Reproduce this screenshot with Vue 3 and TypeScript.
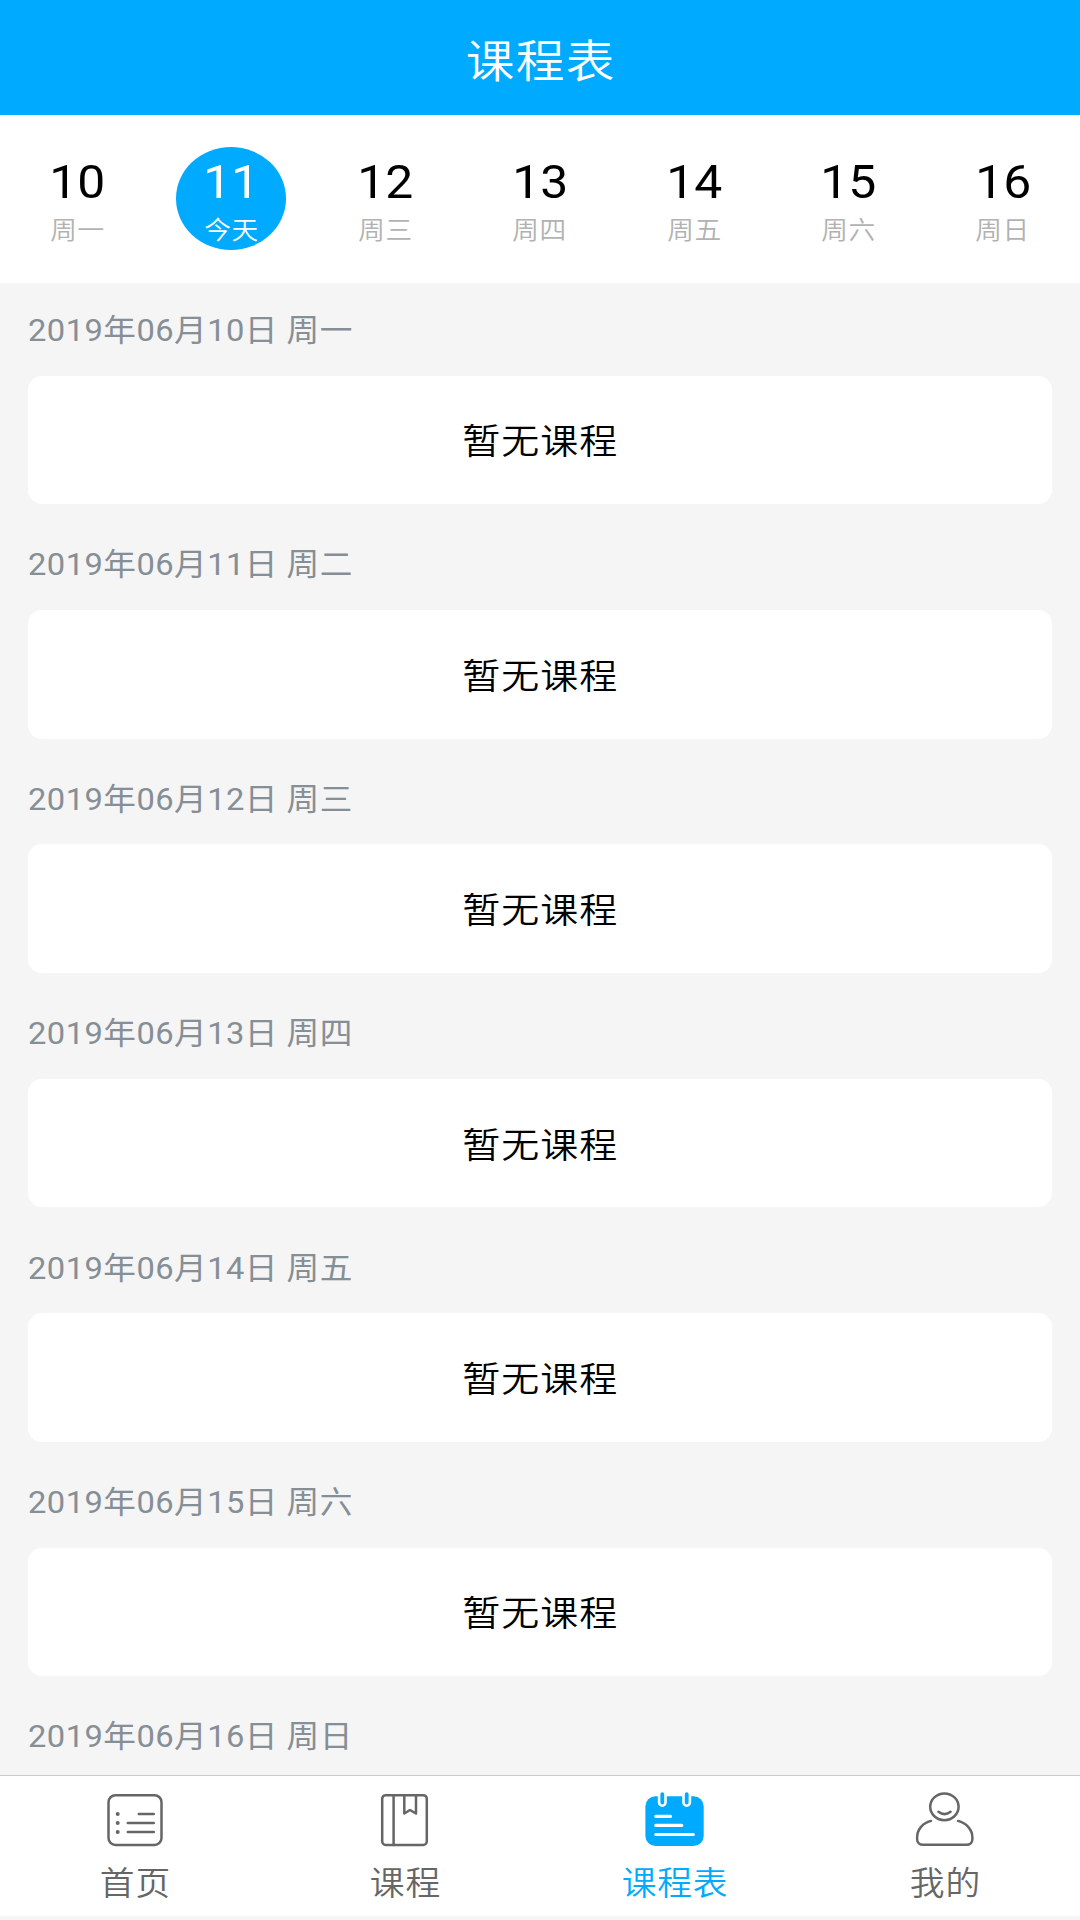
<script setup lang="ts">
interface Day {
  num: string
  week: string
}

const days: Day[] = [
  { num: '10', week: '周一' },
  { num: '11', week: '周二' },
  { num: '12', week: '周三' },
  { num: '13', week: '周四' },
  { num: '14', week: '周五' },
  { num: '15', week: '周六' },
  { num: '16', week: '周日' },
]
const today = '11'

const tabs = [
  { id: 'home', label: '首页' },
  { id: 'course', label: '课程' },
  { id: 'schedule', label: '课程表' },
  { id: 'mine', label: '我的' },
]
const activeTab = 'schedule'
</script>

<template>
  <div class="screen">
    <header class="header"><span class="wide">课程表</span></header>

    <nav class="week">
      <div v-for="d in days" :key="d.num" class="day">
        <div class="bubble" :class="{ today: d.num === today }">
          <span class="num wide">{{ d.num }}</span>
          <span class="name wide">{{ d.num === today ? '今天' : d.week }}</span>
        </div>
      </div>
    </nav>

    <main class="list">
      <section v-for="(d, i) in days" :key="d.num" class="group">
        <h2 class="date"><span class="wide left">2019年06月{{ d.num }}日 {{ d.week }}</span></h2>
        <div v-if="i < days.length - 1" class="card"><span class="wide">暂无课程</span></div>
      </section>
    </main>

    <footer class="tabs">
      <div v-for="t in tabs" :key="t.id" class="tab" :class="{ active: t.id === activeTab }">
        <svg v-if="t.id === 'home'" class="icon" viewBox="0 0 60 60">
          <rect x="3.5" y="5.2" width="53" height="49.8" rx="7" />
          <path d="M33.8 24H48.8M22.8 33H48.8M22.8 42H48.8" />
          <path class="dots" d="M12.7 24h.01M12.7 33h.01M12.7 42h.01" />
        </svg>
        <svg v-else-if="t.id === 'course'" class="icon" viewBox="0 0 60 60">
          <rect x="7.2" y="5.2" width="44.6" height="49.8" rx="3.5" />
          <path d="M18.6 5.2V55M29.3 5.2V23.5L35 20L41 23.5V5.2" />
        </svg>
        <svg v-else-if="t.id === 'schedule'" class="icon" viewBox="0 0 60 60">
          <rect class="solid" x=".4" y="6.2" width="58.3" height="49.8" rx="10" />
          <path class="halo" d="M17.3 2V12.4M41.7 2V12.4" />
          <path class="pin" d="M17.3 4.2V12.6M41.7 4.2V12.6" />
          <path class="lines" d="M10.8 26.3H25.5M10.8 35.4H36.8M10.8 44.5H48.3" />
        </svg>
        <svg v-else class="icon" viewBox="0 0 60 60">
          <ellipse cx="29.4" cy="16.8" rx="14.2" ry="13.4" />
          <path d="M23.4 21.8Q29.4 26.4 35.6 21.8" />
          <path d="M16 30.9C7.5 33 2.1 39.8 2.1 47.5V49C2.1 52.6 4.7 54.8 8.2 54.8H51.4C54.9 54.8 57.4 52.6 57.4 49V47.5C57.4 39.8 51.5 33 43 30.9" />
        </svg>
        <span class="wide">{{ t.label }}</span>
      </div>
    </footer>
  </div>
</template>

<style>
body {
  margin: 0;
}
</style>

<style scoped>
.screen {
  width: 1080px;
  height: 1920px;
  box-sizing: border-box;
  padding-bottom: 4px;
  display: flex;
  flex-direction: column;
  overflow: hidden;
  background: #f5f5f5;
  font-family: Roboto, 'Noto Sans CJK SC', sans-serif;
  font-weight: 400;
}

/* glyphs are slightly wider than tall across the whole app */
.wide {
  display: inline-block;
  white-space: nowrap;
  transform: scaleX(1.067);
}
.wide.left {
  transform-origin: 0 50%;
}

.header {
  flex: none;
  height: 115px;
  display: flex;
  align-items: center;
  justify-content: center;
  padding-top: 10px;
  box-sizing: border-box;
  background: #00aaff;
  color: #fff;
  font-size: 45.6px;
  letter-spacing: 1.3px;
  text-indent: 1.3px;
  font-weight: 350;
  line-height: 60px;
}

.week {
  flex: none;
  height: 168px;
  display: flex;
  background: #fff;
}
.day {
  flex: 1;
  display: flex;
  justify-content: center;
  padding-top: 31.5px;
}
.bubble {
  width: 110px;
  height: 103px;
  display: flex;
  flex-direction: column;
  align-items: center;
  border-radius: 50%;
  color: #000;
}
.num {
  margin-top: 7.5px;
  font-size: 46.7px;
  line-height: 56px;
}
.name {
  margin-top: 3px;
  font-size: 25px;
  letter-spacing: 0.6px;
  font-weight: 350;
  line-height: 36px;
  color: #b2b2b2;
}
.today {
  background: #00aaff;
  color: #fff;
}
.today .name {
  color: #fff;
}

.list {
  flex: 1;
  min-height: 0;
  overflow: hidden;
  padding: 0 28px;
}
.group {
  height: 234.4px;
  display: flex;
  flex-direction: column;
}
.date {
  margin: 0;
  height: 92.6px;
  line-height: 95px;
  font-size: 30.6px;
  letter-spacing: 0.45px;
  font-weight: 400;
  color: #868e96;
}
.card {
  height: 128.6px;
  display: flex;
  align-items: center;
  justify-content: center;
  border-radius: 14px;
  background: #fff;
  color: #000;
  font-size: 35.6px;
  letter-spacing: 1px;
  text-indent: 1px;
  font-weight: 350;
}
.card .wide {
  margin-top: -2px;
}

.tabs {
  flex: none;
  height: 141.5px;
  box-sizing: border-box;
  display: flex;
  border-top: 1px solid #ccc;
  background: #fff;
}
.tab {
  flex: 1;
  display: flex;
  flex-direction: column;
  align-items: center;
  padding-top: 14.5px;
  color: #666;
  font-size: 32.6px;
  letter-spacing: 0.8px;
  font-weight: 350;
  line-height: 48px;
}
.tab .wide {
  margin-top: 10px;
}
.active {
  color: #00aaff;
}
.icon {
  width: 60px;
  height: 60px;
  flex: none;
  fill: none;
  stroke: currentColor;
  stroke-width: 2.5;
  stroke-linecap: round;
  stroke-linejoin: round;
}
.icon .dots {
  stroke-width: 4;
}
.icon .solid {
  fill: currentColor;
  stroke: none;
}
.icon .halo {
  stroke: #fff;
  stroke-width: 9;
}
.icon .pin {
  stroke-width: 3.8;
}
.icon .lines {
  stroke: #fff;
  stroke-width: 3.2;
}
</style>
